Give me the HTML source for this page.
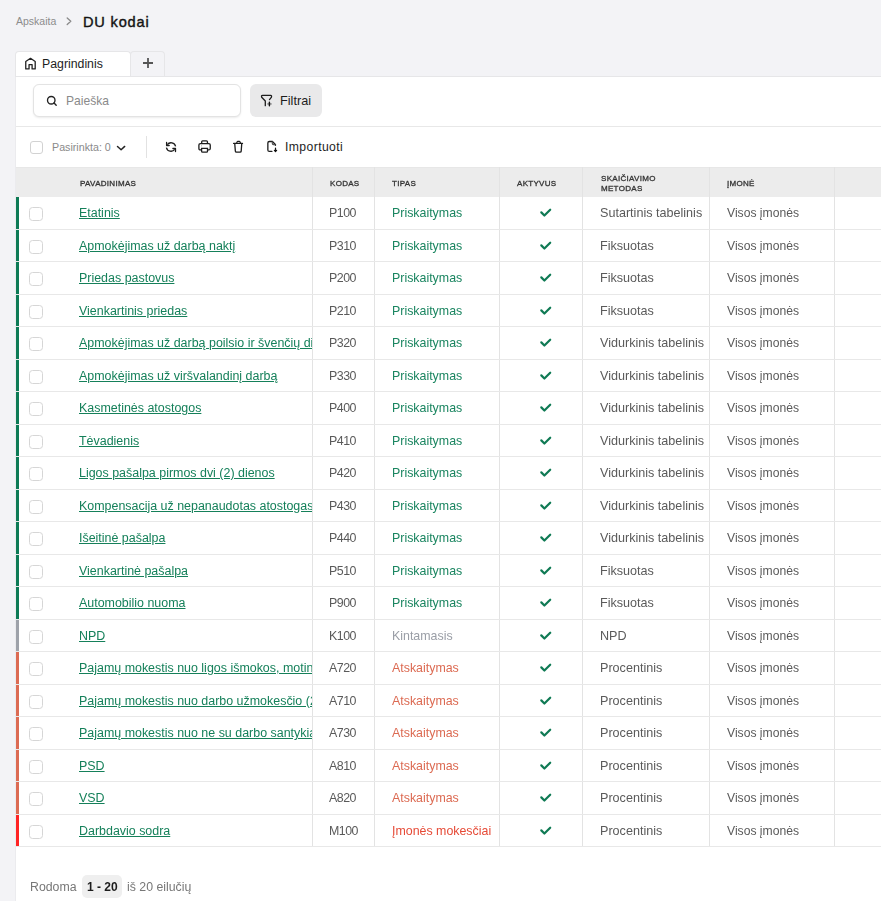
<!DOCTYPE html>
<html>
<head>
<meta charset="utf-8">
<style>
*{margin:0;padding:0;box-sizing:border-box}
html,body{width:881px;height:901px;overflow:hidden}
body{background:#f3f3f6;font-family:"Liberation Sans",sans-serif;position:relative;color:#555}
.abs{position:absolute}
.layer{position:absolute;left:0;top:0;width:881px;height:901px;will-change:transform}
.crumb{position:absolute;left:16px;top:14.5px;font-size:10.5px;color:#8c8c8c;line-height:13px}
.chev{position:absolute;left:66px;top:17px}
.title{position:absolute;left:83px;top:13px;font-size:14.6px;font-weight:normal;-webkit-text-stroke:0.4px #141414;color:#141414;line-height:18px;letter-spacing:0.8px}
.tab1{position:absolute;left:15px;top:51px;width:116px;height:26px;background:#fff;border:1px solid #e6e6e8;border-bottom:none;border-radius:4px 4px 0 0}
.tab2{position:absolute;left:130px;top:51px;width:35px;height:26px;background:#f3f3f6;border:1px solid #e6e6e8;border-bottom:none;border-radius:4px 4px 0 0}
.tabtxt{position:absolute;left:42px;top:57px;font-size:12.3px;color:#1d1d1d;line-height:15px}
.panel{position:absolute;left:15px;top:76px;width:900px;height:900px;background:#fff;border-left:1px solid #ebebee}
.search{position:absolute;left:33px;top:84px;width:208px;height:33px;border:1px solid #e3e3e3;border-radius:6px;background:#fff;box-shadow:0 1px 2px rgba(0,0,0,0.08)}
.ph{position:absolute;left:66px;top:93.5px;font-size:12.1px;color:#8a8a8a;line-height:15px}
.filt{position:absolute;left:250px;top:84px;width:72px;height:33px;background:#e9e9ea;border-radius:6px}
.filttxt{position:absolute;left:280px;top:94px;font-size:12.7px;color:#1d1d1d;line-height:15px}
.sep{position:absolute;left:16px;top:126px;width:870px;height:1px;background:#e8e8e8}
.cbt{position:absolute;left:30px;top:141px;width:13px;height:13px;border:1.5px solid #d2d2d2;border-radius:3px;background:#fff}
.sel{position:absolute;left:52px;top:141px;font-size:10.7px;color:#8a8a8a;line-height:13px}
.vsep{position:absolute;left:146px;top:136px;width:1px;height:22px;background:#e2e2e2}
.imp{position:absolute;left:285px;top:140px;font-size:12.2px;letter-spacing:0.4px;color:#1d1d1d;line-height:15px}
.thead{position:absolute;left:16px;top:167px;width:870px;height:30px;background:#ececec;border-top:1px solid #e7e7e7}
.th{position:absolute;font-size:8px;font-weight:normal;-webkit-text-stroke:0.3px #333;color:#333;letter-spacing:0.3px;line-height:10px}
.vl{position:absolute;width:1px;background:#e3e3e3}
.hl{position:absolute;left:16px;width:870px;height:1px;background:#e8e8e8}
.bar{position:absolute;left:16px;width:3px}
.cb{position:absolute;left:29px;width:14px;height:14px;border:1.3px solid #d6d6d6;border-radius:3.5px;background:#fff}
.cell{position:absolute;height:15px;font-size:12.4px;line-height:15px;white-space:nowrap;overflow:hidden;color:#5a5a5a}
.nm{left:79px;width:233px;font-size:12.45px}
.nm a{color:#15805a;text-decoration:underline;text-underline-offset:1px}
.cd{left:329px;width:44px;letter-spacing:-0.5px}
.tp{left:392px;width:106px}
.mt{left:600px;width:109px;font-size:12.6px}
.im{left:727px;width:106px;font-size:12.15px}
.ck{position:absolute;left:536px;width:20px;height:32px;line-height:0}
.pg1{position:absolute;left:30px;top:880.3px;font-size:12.3px;color:#777;line-height:15px}
.badge{position:absolute;left:82px;top:875px;width:40px;height:23px;background:#efefef;border-radius:5px}
.pg2{position:absolute;left:87px;top:880.3px;font-size:12px;font-weight:bold;color:#1d1d1d;line-height:15px}
.pg3{position:absolute;left:127px;top:880.3px;font-size:12.3px;color:#777;line-height:15px}
</style>
</head>
<body>
<div class="crumb">Apskaita</div>
<svg class="abs" style="left:62px;top:14px" width="14" height="14" viewBox="0 0 14 14"><path d="M5.2 4 L8.8 7.3 L5.2 10.6" fill="none" stroke="#8a8a8a" stroke-width="1.3" stroke-linecap="round" stroke-linejoin="round"/></svg>
<div class="title">DU kodai</div>

<div class="panel"></div>
<div class="tab1"></div>
<div class="tab2"></div>
<div class="abs" style="left:15px;top:76px;width:870px;height:1px;background:#e6e6e8"></div>
<svg class="abs" style="left:22px;top:55px" width="18" height="18" viewBox="0 0 18 18"><path d="M3.75 13.9 V6.5 L8.5 3.3 L13.2 6.5 V13.9 H10.1 V9.6 H7.05 V13.9 Z" fill="none" stroke="#222" stroke-width="1.3" stroke-linejoin="round"/></svg>
<div class="tabtxt">Pagrindinis</div>
<svg class="abs" style="left:143px;top:58px" width="10" height="10" viewBox="0 0 10 10"><path d="M5 0 V10 M0 5 H10" stroke="#555" stroke-width="1.8"/></svg>

<div class="search"></div>
<svg class="abs" style="left:42px;top:91px" width="20" height="20" viewBox="0 0 20 20"><circle cx="9.25" cy="9.25" r="3.75" fill="none" stroke="#222" stroke-width="1.35"/><path d="M12.1 12.1 L14.2 14.2" stroke="#222" stroke-width="1.4" stroke-linecap="round"/></svg>
<div class="ph">Paieška</div>
<div class="filt"></div>
<svg class="abs" style="left:256px;top:91px" width="20" height="20" viewBox="0 0 20 20"><path d="M13.5 8.6 L15.3 6.4 Q16.1 4.4 14.6 4.4 H6.6 Q5 4.4 5.7 6.2 L9.3 10 V14.7" fill="none" stroke="#1d1d1d" stroke-width="1.3" stroke-linecap="round" stroke-linejoin="round"/><path d="M11.3 12.95 H15.6" stroke="#666" stroke-width="1.2"/><path d="M13.4 11.1 V14.8" stroke="#111" stroke-width="1.4" stroke-linecap="round"/></svg>
<div class="filttxt">Filtrai</div>
<div class="sep"></div>

<div class="cbt"></div>
<div class="sel">Pasirinkta: 0</div>
<svg class="abs" style="left:112px;top:138px" width="18" height="18" viewBox="0 0 18 18"><path d="M5.5 8.5 L9.1 11.8 L12.7 8.4" fill="none" stroke="#222" stroke-width="1.45" stroke-linecap="round" stroke-linejoin="round"/></svg>
<div class="vsep"></div>
<svg class="abs" style="left:162px;top:138px" width="18" height="18" viewBox="0 0 18 18"><path d="M13.6 8.4 A4.7 4.7 0 0 0 5.3 6.6 M4.4 9.6 A4.7 4.7 0 0 0 12.7 11.4" fill="none" stroke="#1d1d1d" stroke-width="1.3"/><path d="M4.6 4.5 V7.5 H7.2 M13.5 13.5 V10.5 H10.9" fill="none" stroke="#1d1d1d" stroke-width="1.3" stroke-linejoin="round" stroke-linecap="round"/></svg>
<svg class="abs" style="left:195px;top:137px" width="20" height="20" viewBox="0 0 20 20"><path d="M6.7 6.6 V4.8 Q6.7 3.85 7.65 3.85 H11.5 Q12.45 3.85 12.45 4.8 V6.6" fill="none" stroke="#1d1d1d" stroke-width="1.3"/><path d="M6.6 12.9 H5.4 Q3.9 12.9 3.9 11.4 V8.1 Q3.9 6.65 5.4 6.65 H13.8 Q15.25 6.65 15.25 8.1 V11.4 Q15.25 12.9 13.8 12.9 H12.5" fill="none" stroke="#1d1d1d" stroke-width="1.3"/><path d="M6.6 11.45 H12.5 V14.2 Q12.5 15.2 11.5 15.2 H7.6 Q6.6 15.2 6.6 14.2 Z" fill="none" stroke="#1d1d1d" stroke-width="1.3"/><path d="M6.5 8.3 V9.4" stroke="#999" stroke-width="0.8"/></svg>
<svg class="abs" style="left:228px;top:137px" width="20" height="20" viewBox="0 0 20 20"><path d="M5.6 6.45 H14.5" stroke="#1d1d1d" stroke-width="1.3" stroke-linecap="round"/><path d="M8.6 6.3 L9.1 4.9 Q9.3 4.35 9.9 4.35 H11.2 Q11.8 4.35 12 4.9 L12.5 6.3" fill="none" stroke="#1d1d1d" stroke-width="1.2"/><path d="M6.75 6.6 L7.35 14.1 Q7.45 15.1 8.45 15.1 H12.1 Q13.1 15.1 13.2 14.1 L13.75 6.6" fill="none" stroke="#1d1d1d" stroke-width="1.3"/></svg>
<svg class="abs" style="left:262px;top:137px" width="20" height="20" viewBox="0 0 20 20"><path d="M13.45 8.3 V7.6 L10.35 4.5 H7.35 Q5.85 4.5 5.85 6 V12.9 Q5.85 14.4 7.35 14.4 H9.9" fill="none" stroke="#1d1d1d" stroke-width="1.3" stroke-linecap="round"/><path d="M10.35 4.6 V6.6 Q10.35 7.6 11.35 7.6 H13.4" fill="none" stroke="#555" stroke-width="1.2"/><path d="M13.5 11.1 V14.4 M12.4 13.3 L13.5 14.5 L14.6 13.3" fill="none" stroke="#111" stroke-width="1.2" stroke-linecap="round" stroke-linejoin="round"/></svg>
<div class="imp">Importuoti</div>

<div class="thead"></div>
<div class="layer">
<div class="th" style="left:80px;top:178.5px">PAVADINIMAS</div>
<div class="th" style="left:330px;top:178.5px">KODAS</div>
<div class="th" style="left:392px;top:178.5px">TIPAS</div>
<div class="th" style="left:517px;top:178.5px">AKTYVUS</div>
<div class="th" style="left:601px;top:174px">SKAIČIAVIMO<br>METODAS</div>
<div class="th" style="left:727px;top:178.5px">ĮMONĖ</div>
</div>

<div class="vl" style="left:312px;top:167px;height:680px"></div>
<div class="vl" style="left:374px;top:167px;height:680px"></div>
<div class="vl" style="left:499px;top:167px;height:680px"></div>
<div class="vl" style="left:582px;top:167px;height:680px"></div>
<div class="vl" style="left:709px;top:167px;height:680px"></div>
<div class="vl" style="left:834px;top:167px;height:680px"></div>

<div class="layer"><div class="bar" style="top:197.0px;height:31.5px;background:#0d7a55"></div>
<div class="hl" style="top:228.5px"></div>
<div class="cb" style="top:207.25px"></div>
<div class="cell nm" style="top:206.0px"><a>Etatinis</a></div>
<div class="cell cd" style="top:206.0px">P100</div>
<div class="cell tp" style="top:206.0px;color:#1a8560">Priskaitymas</div>
<div class="ck" style="top:197.0px"><svg width="20" height="32" viewBox="0 0 20 32"><path d="M5.3 15.4 L8.4 18.5 L14.2 12.7" fill="none" stroke="#0f7a54" stroke-width="2.2" stroke-linecap="round" stroke-linejoin="round"/></svg></div>
<div class="cell mt" style="top:206.0px">Sutartinis tabelinis</div>
<div class="cell im" style="top:206.0px">Visos įmonės</div>
<div class="bar" style="top:229.5px;height:31.5px;background:#0d7a55"></div>
<div class="hl" style="top:261.0px"></div>
<div class="cb" style="top:239.75px"></div>
<div class="cell nm" style="top:238.5px"><a>Apmokėjimas už darbą naktį</a></div>
<div class="cell cd" style="top:238.5px">P310</div>
<div class="cell tp" style="top:238.5px;color:#1a8560">Priskaitymas</div>
<div class="ck" style="top:229.5px"><svg width="20" height="32" viewBox="0 0 20 32"><path d="M5.3 15.4 L8.4 18.5 L14.2 12.7" fill="none" stroke="#0f7a54" stroke-width="2.2" stroke-linecap="round" stroke-linejoin="round"/></svg></div>
<div class="cell mt" style="top:238.5px">Fiksuotas</div>
<div class="cell im" style="top:238.5px">Visos įmonės</div>
<div class="bar" style="top:262.0px;height:31.5px;background:#0d7a55"></div>
<div class="hl" style="top:293.5px"></div>
<div class="cb" style="top:272.25px"></div>
<div class="cell nm" style="top:271.0px"><a>Priedas pastovus</a></div>
<div class="cell cd" style="top:271.0px">P200</div>
<div class="cell tp" style="top:271.0px;color:#1a8560">Priskaitymas</div>
<div class="ck" style="top:262.0px"><svg width="20" height="32" viewBox="0 0 20 32"><path d="M5.3 15.4 L8.4 18.5 L14.2 12.7" fill="none" stroke="#0f7a54" stroke-width="2.2" stroke-linecap="round" stroke-linejoin="round"/></svg></div>
<div class="cell mt" style="top:271.0px">Fiksuotas</div>
<div class="cell im" style="top:271.0px">Visos įmonės</div>
<div class="bar" style="top:294.5px;height:31.5px;background:#0d7a55"></div>
<div class="hl" style="top:326.0px"></div>
<div class="cb" style="top:304.75px"></div>
<div class="cell nm" style="top:303.5px"><a>Vienkartinis priedas</a></div>
<div class="cell cd" style="top:303.5px">P210</div>
<div class="cell tp" style="top:303.5px;color:#1a8560">Priskaitymas</div>
<div class="ck" style="top:294.5px"><svg width="20" height="32" viewBox="0 0 20 32"><path d="M5.3 15.4 L8.4 18.5 L14.2 12.7" fill="none" stroke="#0f7a54" stroke-width="2.2" stroke-linecap="round" stroke-linejoin="round"/></svg></div>
<div class="cell mt" style="top:303.5px">Fiksuotas</div>
<div class="cell im" style="top:303.5px">Visos įmonės</div>
<div class="bar" style="top:327.0px;height:31.5px;background:#0d7a55"></div>
<div class="hl" style="top:358.5px"></div>
<div class="cb" style="top:337.25px"></div>
<div class="cell nm" style="top:336.0px"><a>Apmokėjimas už darbą poilsio ir švenčių dienomis</a></div>
<div class="cell cd" style="top:336.0px">P320</div>
<div class="cell tp" style="top:336.0px;color:#1a8560">Priskaitymas</div>
<div class="ck" style="top:327.0px"><svg width="20" height="32" viewBox="0 0 20 32"><path d="M5.3 15.4 L8.4 18.5 L14.2 12.7" fill="none" stroke="#0f7a54" stroke-width="2.2" stroke-linecap="round" stroke-linejoin="round"/></svg></div>
<div class="cell mt" style="top:336.0px">Vidurkinis tabelinis</div>
<div class="cell im" style="top:336.0px">Visos įmonės</div>
<div class="bar" style="top:359.5px;height:31.5px;background:#0d7a55"></div>
<div class="hl" style="top:391.0px"></div>
<div class="cb" style="top:369.75px"></div>
<div class="cell nm" style="top:368.5px"><a>Apmokėjimas už viršvalandinį darbą</a></div>
<div class="cell cd" style="top:368.5px">P330</div>
<div class="cell tp" style="top:368.5px;color:#1a8560">Priskaitymas</div>
<div class="ck" style="top:359.5px"><svg width="20" height="32" viewBox="0 0 20 32"><path d="M5.3 15.4 L8.4 18.5 L14.2 12.7" fill="none" stroke="#0f7a54" stroke-width="2.2" stroke-linecap="round" stroke-linejoin="round"/></svg></div>
<div class="cell mt" style="top:368.5px">Vidurkinis tabelinis</div>
<div class="cell im" style="top:368.5px">Visos įmonės</div>
<div class="bar" style="top:392.0px;height:31.5px;background:#0d7a55"></div>
<div class="hl" style="top:423.5px"></div>
<div class="cb" style="top:402.25px"></div>
<div class="cell nm" style="top:401.0px"><a>Kasmetinės atostogos</a></div>
<div class="cell cd" style="top:401.0px">P400</div>
<div class="cell tp" style="top:401.0px;color:#1a8560">Priskaitymas</div>
<div class="ck" style="top:392.0px"><svg width="20" height="32" viewBox="0 0 20 32"><path d="M5.3 15.4 L8.4 18.5 L14.2 12.7" fill="none" stroke="#0f7a54" stroke-width="2.2" stroke-linecap="round" stroke-linejoin="round"/></svg></div>
<div class="cell mt" style="top:401.0px">Vidurkinis tabelinis</div>
<div class="cell im" style="top:401.0px">Visos įmonės</div>
<div class="bar" style="top:424.5px;height:31.5px;background:#0d7a55"></div>
<div class="hl" style="top:456.0px"></div>
<div class="cb" style="top:434.75px"></div>
<div class="cell nm" style="top:433.5px"><a>Tėvadienis</a></div>
<div class="cell cd" style="top:433.5px">P410</div>
<div class="cell tp" style="top:433.5px;color:#1a8560">Priskaitymas</div>
<div class="ck" style="top:424.5px"><svg width="20" height="32" viewBox="0 0 20 32"><path d="M5.3 15.4 L8.4 18.5 L14.2 12.7" fill="none" stroke="#0f7a54" stroke-width="2.2" stroke-linecap="round" stroke-linejoin="round"/></svg></div>
<div class="cell mt" style="top:433.5px">Vidurkinis tabelinis</div>
<div class="cell im" style="top:433.5px">Visos įmonės</div>
<div class="bar" style="top:457.0px;height:31.5px;background:#0d7a55"></div>
<div class="hl" style="top:488.5px"></div>
<div class="cb" style="top:467.25px"></div>
<div class="cell nm" style="top:466.0px"><a>Ligos pašalpa pirmos dvi (2) dienos</a></div>
<div class="cell cd" style="top:466.0px">P420</div>
<div class="cell tp" style="top:466.0px;color:#1a8560">Priskaitymas</div>
<div class="ck" style="top:457.0px"><svg width="20" height="32" viewBox="0 0 20 32"><path d="M5.3 15.4 L8.4 18.5 L14.2 12.7" fill="none" stroke="#0f7a54" stroke-width="2.2" stroke-linecap="round" stroke-linejoin="round"/></svg></div>
<div class="cell mt" style="top:466.0px">Vidurkinis tabelinis</div>
<div class="cell im" style="top:466.0px">Visos įmonės</div>
<div class="bar" style="top:489.5px;height:31.5px;background:#0d7a55"></div>
<div class="hl" style="top:521.0px"></div>
<div class="cb" style="top:499.75px"></div>
<div class="cell nm" style="top:498.5px"><a>Kompensacija už nepanaudotas atostogas</a></div>
<div class="cell cd" style="top:498.5px">P430</div>
<div class="cell tp" style="top:498.5px;color:#1a8560">Priskaitymas</div>
<div class="ck" style="top:489.5px"><svg width="20" height="32" viewBox="0 0 20 32"><path d="M5.3 15.4 L8.4 18.5 L14.2 12.7" fill="none" stroke="#0f7a54" stroke-width="2.2" stroke-linecap="round" stroke-linejoin="round"/></svg></div>
<div class="cell mt" style="top:498.5px">Vidurkinis tabelinis</div>
<div class="cell im" style="top:498.5px">Visos įmonės</div>
<div class="bar" style="top:522.0px;height:31.5px;background:#0d7a55"></div>
<div class="hl" style="top:553.5px"></div>
<div class="cb" style="top:532.25px"></div>
<div class="cell nm" style="top:531.0px"><a>Išeitinė pašalpa</a></div>
<div class="cell cd" style="top:531.0px">P440</div>
<div class="cell tp" style="top:531.0px;color:#1a8560">Priskaitymas</div>
<div class="ck" style="top:522.0px"><svg width="20" height="32" viewBox="0 0 20 32"><path d="M5.3 15.4 L8.4 18.5 L14.2 12.7" fill="none" stroke="#0f7a54" stroke-width="2.2" stroke-linecap="round" stroke-linejoin="round"/></svg></div>
<div class="cell mt" style="top:531.0px">Vidurkinis tabelinis</div>
<div class="cell im" style="top:531.0px">Visos įmonės</div>
<div class="bar" style="top:554.5px;height:31.5px;background:#0d7a55"></div>
<div class="hl" style="top:586.0px"></div>
<div class="cb" style="top:564.75px"></div>
<div class="cell nm" style="top:563.5px"><a>Vienkartinė pašalpa</a></div>
<div class="cell cd" style="top:563.5px">P510</div>
<div class="cell tp" style="top:563.5px;color:#1a8560">Priskaitymas</div>
<div class="ck" style="top:554.5px"><svg width="20" height="32" viewBox="0 0 20 32"><path d="M5.3 15.4 L8.4 18.5 L14.2 12.7" fill="none" stroke="#0f7a54" stroke-width="2.2" stroke-linecap="round" stroke-linejoin="round"/></svg></div>
<div class="cell mt" style="top:563.5px">Fiksuotas</div>
<div class="cell im" style="top:563.5px">Visos įmonės</div>
<div class="bar" style="top:587.0px;height:31.5px;background:#0d7a55"></div>
<div class="hl" style="top:618.5px"></div>
<div class="cb" style="top:597.25px"></div>
<div class="cell nm" style="top:596.0px"><a>Automobilio nuoma</a></div>
<div class="cell cd" style="top:596.0px">P900</div>
<div class="cell tp" style="top:596.0px;color:#1a8560">Priskaitymas</div>
<div class="ck" style="top:587.0px"><svg width="20" height="32" viewBox="0 0 20 32"><path d="M5.3 15.4 L8.4 18.5 L14.2 12.7" fill="none" stroke="#0f7a54" stroke-width="2.2" stroke-linecap="round" stroke-linejoin="round"/></svg></div>
<div class="cell mt" style="top:596.0px">Fiksuotas</div>
<div class="cell im" style="top:596.0px">Visos įmonės</div>
<div class="bar" style="top:619.5px;height:31.5px;background:#9ea2aa"></div>
<div class="hl" style="top:651.0px"></div>
<div class="cb" style="top:629.75px"></div>
<div class="cell nm" style="top:628.5px"><a>NPD</a></div>
<div class="cell cd" style="top:628.5px">K100</div>
<div class="cell tp" style="top:628.5px;color:#9a9ea6">Kintamasis</div>
<div class="ck" style="top:619.5px"><svg width="20" height="32" viewBox="0 0 20 32"><path d="M5.3 15.4 L8.4 18.5 L14.2 12.7" fill="none" stroke="#0f7a54" stroke-width="2.2" stroke-linecap="round" stroke-linejoin="round"/></svg></div>
<div class="cell mt" style="top:628.5px">NPD</div>
<div class="cell im" style="top:628.5px">Visos įmonės</div>
<div class="bar" style="top:652.0px;height:31.5px;background:#dc6b53"></div>
<div class="hl" style="top:683.5px"></div>
<div class="cb" style="top:662.25px"></div>
<div class="cell nm" style="top:661.0px"><a>Pajamų mokestis nuo ligos išmokos, motinystės</a></div>
<div class="cell cd" style="top:661.0px">A720</div>
<div class="cell tp" style="top:661.0px;color:#dc6a52">Atskaitymas</div>
<div class="ck" style="top:652.0px"><svg width="20" height="32" viewBox="0 0 20 32"><path d="M5.3 15.4 L8.4 18.5 L14.2 12.7" fill="none" stroke="#0f7a54" stroke-width="2.2" stroke-linecap="round" stroke-linejoin="round"/></svg></div>
<div class="cell mt" style="top:661.0px">Procentinis</div>
<div class="cell im" style="top:661.0px">Visos įmonės</div>
<div class="bar" style="top:684.5px;height:31.5px;background:#dc6b53"></div>
<div class="hl" style="top:716.0px"></div>
<div class="cb" style="top:694.75px"></div>
<div class="cell nm" style="top:693.5px"><a>Pajamų mokestis nuo darbo užmokesčio (20%)</a></div>
<div class="cell cd" style="top:693.5px">A710</div>
<div class="cell tp" style="top:693.5px;color:#dc6a52">Atskaitymas</div>
<div class="ck" style="top:684.5px"><svg width="20" height="32" viewBox="0 0 20 32"><path d="M5.3 15.4 L8.4 18.5 L14.2 12.7" fill="none" stroke="#0f7a54" stroke-width="2.2" stroke-linecap="round" stroke-linejoin="round"/></svg></div>
<div class="cell mt" style="top:693.5px">Procentinis</div>
<div class="cell im" style="top:693.5px">Visos įmonės</div>
<div class="bar" style="top:717.0px;height:31.5px;background:#dc6b53"></div>
<div class="hl" style="top:748.5px"></div>
<div class="cb" style="top:727.25px"></div>
<div class="cell nm" style="top:726.0px"><a>Pajamų mokestis nuo ne su darbo santykiais</a></div>
<div class="cell cd" style="top:726.0px">A730</div>
<div class="cell tp" style="top:726.0px;color:#dc6a52">Atskaitymas</div>
<div class="ck" style="top:717.0px"><svg width="20" height="32" viewBox="0 0 20 32"><path d="M5.3 15.4 L8.4 18.5 L14.2 12.7" fill="none" stroke="#0f7a54" stroke-width="2.2" stroke-linecap="round" stroke-linejoin="round"/></svg></div>
<div class="cell mt" style="top:726.0px">Procentinis</div>
<div class="cell im" style="top:726.0px">Visos įmonės</div>
<div class="bar" style="top:749.5px;height:31.5px;background:#dc6b53"></div>
<div class="hl" style="top:781.0px"></div>
<div class="cb" style="top:759.75px"></div>
<div class="cell nm" style="top:758.5px"><a>PSD</a></div>
<div class="cell cd" style="top:758.5px">A810</div>
<div class="cell tp" style="top:758.5px;color:#dc6a52">Atskaitymas</div>
<div class="ck" style="top:749.5px"><svg width="20" height="32" viewBox="0 0 20 32"><path d="M5.3 15.4 L8.4 18.5 L14.2 12.7" fill="none" stroke="#0f7a54" stroke-width="2.2" stroke-linecap="round" stroke-linejoin="round"/></svg></div>
<div class="cell mt" style="top:758.5px">Procentinis</div>
<div class="cell im" style="top:758.5px">Visos įmonės</div>
<div class="bar" style="top:782.0px;height:31.5px;background:#dc6b53"></div>
<div class="hl" style="top:813.5px"></div>
<div class="cb" style="top:792.25px"></div>
<div class="cell nm" style="top:791.0px"><a>VSD</a></div>
<div class="cell cd" style="top:791.0px">A820</div>
<div class="cell tp" style="top:791.0px;color:#dc6a52">Atskaitymas</div>
<div class="ck" style="top:782.0px"><svg width="20" height="32" viewBox="0 0 20 32"><path d="M5.3 15.4 L8.4 18.5 L14.2 12.7" fill="none" stroke="#0f7a54" stroke-width="2.2" stroke-linecap="round" stroke-linejoin="round"/></svg></div>
<div class="cell mt" style="top:791.0px">Procentinis</div>
<div class="cell im" style="top:791.0px">Visos įmonės</div>
<div class="bar" style="top:814.5px;height:31.5px;background:#ff2424"></div>
<div class="hl" style="top:846.0px"></div>
<div class="cb" style="top:824.75px"></div>
<div class="cell nm" style="top:823.5px"><a>Darbdavio sodra</a></div>
<div class="cell cd" style="top:823.5px">M100</div>
<div class="cell tp" style="top:823.5px;color:#e64a36">Įmonės mokesčiai</div>
<div class="ck" style="top:814.5px"><svg width="20" height="32" viewBox="0 0 20 32"><path d="M5.3 15.4 L8.4 18.5 L14.2 12.7" fill="none" stroke="#0f7a54" stroke-width="2.2" stroke-linecap="round" stroke-linejoin="round"/></svg></div>
<div class="cell mt" style="top:823.5px">Procentinis</div>
<div class="cell im" style="top:823.5px">Visos įmonės</div></div>

<div class="pg1">Rodoma</div>
<div class="badge"></div>
<div class="pg2">1 - 20</div>
<div class="pg3">iš 20 eilučių</div>
</body>
</html>
